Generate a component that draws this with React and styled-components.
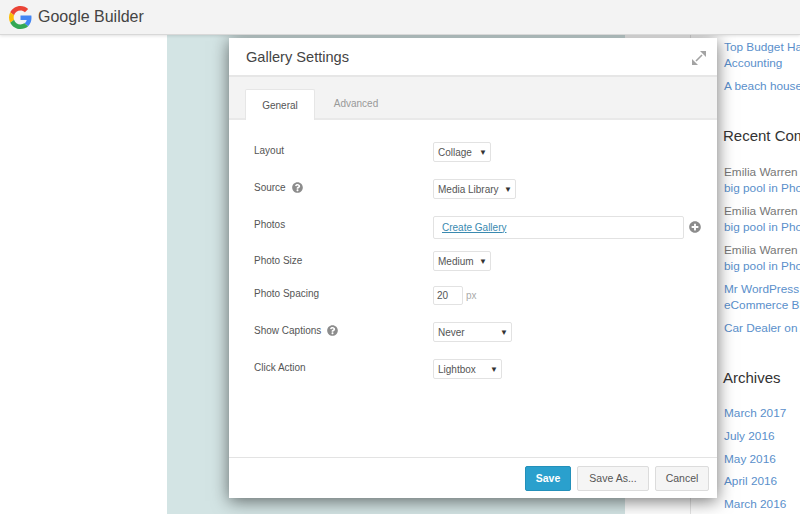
import React from "react";
import styled, { createGlobalStyle } from "styled-components";
import { FaPlusCircle, FaQuestionCircle } from "react-icons/fa";

const GlobalStyle = createGlobalStyle`
    html, body {
        margin: 0;
        height: 100%;
        overflow: hidden;
        background: #fff;
        font-family: "Liberation Sans", Arial, sans-serif;
    }
`;

const Page = styled.div`
    position: relative;
    width: 800px;
    height: 514px;
    overflow: hidden;
`;

const TopBar = styled.header`
    position: relative;
    z-index: 2;
    display: flex;
    align-items: center;
    gap: 6px;
    height: 34px;
    padding-left: 9px;
    background: #f3f3f3;
    border-bottom: 1px solid #d8d8d8;
    box-shadow: 0 1px 3px rgba(0, 0, 0, 0.12);
`;

const Brand = styled.span`
    font-size: 16px;
    color: #444;
`;

const Content = styled.div`
    display: flex;
    height: 479px;
`;

const Gutter = styled.div`
    width: 167px;
`;

const Hero = styled.div`
    width: 458px;
    background: #d3e4e4;
`;

const Spacer = styled.div`
    width: 65px;
`;

const Sidebar = styled.aside`
    flex: 1;
    min-width: 0;
    padding: 4px 0 0 33px;
    border-left: 1px solid #e4e4e4;
    overflow: hidden;
    white-space: nowrap;
    font-size: 11.8px;
    line-height: 16px;
`;

const SideLink = styled.a`
    display: block;
    color: #5a8fcb;
    margin-bottom: 7px;
`;

const ArchiveLink = styled(SideLink)`
    margin-bottom: 6.75px;
`;

const Muted = styled.div`
    color: #777;
    margin-bottom: 7px;
`;

const Blue = styled.span`
    display: block;
    color: #5a8fcb;
`;

const SideTitle = styled.h3`
    margin: ${(p) => p.$top}px 0 ${(p) => p.$bottom}px -1px;
    font-size: 15px;
    font-weight: 400;
    line-height: 20px;
    color: #333;
`;

const Modal = styled.section`
    position: absolute;
    z-index: 1;
    left: 229px;
    top: 38px;
    width: 488px;
    height: 460px;
    display: flex;
    flex-direction: column;
    background: #fff;
    box-shadow: 0 3px 16px rgba(0, 0, 0, 0.55);
`;

const ModalHeader = styled.div`
    display: flex;
    align-items: center;
    justify-content: space-between;
    height: 37px;
    padding: 0 11px 0 17px;
    border-bottom: 2px solid #e6e6e6;
`;

const ModalTitle = styled.h2`
    margin: 0;
    font-size: 14.6px;
    font-weight: 400;
    color: #444;
`;

const ExpandButton = styled.span`
    display: flex;
    margin-top: 3px;
`;

const Tabs = styled.div`
    display: flex;
    align-items: flex-end;
    height: 41px;
    padding-left: 16px;
    background: #f3f3f3;
    border-bottom: 2px solid #e9e9e9;
`;

const Tab = styled.div`
    display: flex;
    align-items: center;
    justify-content: center;
    box-sizing: border-box;
    width: ${(p) => (p.$active ? 70 : 82)}px;
    height: ${(p) => (p.$active ? 31 : 29)}px;
    margin-bottom: ${(p) => (p.$active ? -2 : 0)}px;
    font-size: 10px;
    color: ${(p) => (p.$active ? "#555" : "#999")};
    background: ${(p) => (p.$active ? "#fff" : "transparent")};
    border: ${(p) => (p.$active ? "1px solid #e6e6e6" : "none")};
    border-bottom: none;
    border-radius: 2px 2px 0 0;
`;

const Form = styled.div`
    flex: 1;
    padding: 13px 0 0 25px;
`;

const Row = styled.div`
    display: flex;
    align-items: center;
    height: ${(p) => p.$height}px;
`;

const Label = styled.div`
    display: flex;
    align-items: center;
    gap: 6px;
    width: 179px;
    margin-top: -${(p) => p.$lift || 4}px;
    font-size: 10px;
    color: #555;
`;

const Help = styled.span`
    display: flex;
    color: #8c8c8c;
    font-size: 11px;
`;

const Select = styled.div`
    display: flex;
    align-items: center;
    justify-content: space-between;
    box-sizing: border-box;
    width: ${(p) => p.$width}px;
    height: 20px;
    padding: 0 3px 0 4px;
    border: 1px solid #e2e2e2;
    border-radius: 2px;
    background: #fff;
    font-size: 10px;
    color: #555;
    white-space: nowrap;
`;

const Caret = styled.span`
    font-size: 8px;
    color: #333;
`;

const PickerBox = styled.div`
    display: flex;
    align-items: center;
    box-sizing: border-box;
    width: 251px;
    height: 23px;
    padding-left: 8px;
    border: 1px solid #e2e2e2;
    border-radius: 2px;
`;

const PickerLink = styled.a`
    font-size: 10px;
    color: #3a8ab0;
    text-decoration: underline;
`;

const AddButton = styled.span`
    display: flex;
    margin-left: 5px;
    color: #8c8c8c;
    font-size: 12px;
`;

const NumberInput = styled.div`
    display: flex;
    align-items: center;
    box-sizing: border-box;
    width: 30px;
    height: 19px;
    padding-left: 3px;
    border: 1px solid #e2e2e2;
    border-radius: 2px;
    font-size: 10px;
    color: #555;
`;

const Unit = styled.span`
    margin-left: 3px;
    font-size: 10px;
    color: #aaa;
`;

const Footer = styled.div`
    display: flex;
    align-items: center;
    justify-content: flex-end;
    gap: 6px;
    height: 40px;
    padding-right: 8px;
    border-top: 1px solid #e3e3e3;
`;

const Button = styled.button`
    box-sizing: border-box;
    width: ${(p) => p.$width}px;
    height: 25px;
    padding: 0;
    font-family: inherit;
    font-size: 10.5px;
    font-weight: ${(p) => (p.$primary ? 700 : 400)};
    color: ${(p) => (p.$primary ? "#fff" : "#555")};
    background: ${(p) => (p.$primary ? "#2aa0cd" : "#f5f5f5")};
    border: 1px solid ${(p) => (p.$primary ? "#2390ba" : "#dcdcdc")};
    border-radius: 2px;
`;

const GoogleLogo = () => (
    <svg width="23" height="23" viewBox="0 0 48 48">
        <path fill="#EA4335" d="M24 9.5c3.54 0 6.71 1.22 9.21 3.6l6.85-6.85C35.9 2.38 30.47 0 24 0 14.62 0 6.51 5.38 2.56 13.22l7.98 6.19C12.43 13.72 17.74 9.5 24 9.5z" />
        <path fill="#4285F4" d="M46.98 24.55c0-1.57-.15-3.09-.38-4.55H24v9.02h12.94c-.58 2.96-2.26 5.48-4.78 7.18l7.73 6c4.51-4.18 7.09-10.36 7.09-17.65z" />
        <path fill="#FBBC05" d="M10.53 28.59c-.48-1.45-.76-2.99-.76-4.59s.27-3.14.76-4.59l-7.98-6.19C.92 16.46 0 20.12 0 24c0 3.88.92 7.54 2.56 10.78l7.97-6.19z" />
        <path fill="#34A853" d="M24 48c6.48 0 11.93-2.13 15.89-5.81l-7.73-6c-2.15 1.45-4.92 2.3-8.16 2.3-6.26 0-11.57-4.22-13.47-9.91l-7.98 6.19C6.51 42.62 14.62 48 24 48z" />
    </svg>
);

// double-headed diagonal arrow, the resize handle in the modal header
const ExpandIcon = () => (
    <svg width="14" height="14" viewBox="0 0 14 14" fill="#a3a3a3">
        <polygon points="8,0 14,0 14,6" />
        <polygon points="0,8 0,14 6,14" />
        <line x1="10" y1="4" x2="4" y2="10" stroke="#a3a3a3" strokeWidth="1.6" />
    </svg>
);

const SelectField = ({ value, width }) => (
    <Select $width={width}>
        {value}
        <Caret>▼</Caret>
    </Select>
);

export default function App() {
    return (
        <Page>
            <GlobalStyle />
            <TopBar>
                <GoogleLogo />
                <Brand>Google Builder</Brand>
            </TopBar>
            <Content>
                <Gutter />
                <Hero />
                <Spacer />
                <Sidebar>
                    <SideLink>
                        Top Budget Hacks for
                        <br />
                        Accounting
                    </SideLink>
                    <SideLink>A beach house in Malibu</SideLink>
                    <SideTitle $top={32} $bottom={18}>Recent Comments</SideTitle>
                    <Muted>
                        Emilia Warren on
                        <Blue>big pool in Photoshop</Blue>
                    </Muted>
                    <Muted>
                        Emilia Warren on
                        <Blue>big pool in Photoshop</Blue>
                    </Muted>
                    <Muted>
                        Emilia Warren on
                        <Blue>big pool in Photoshop</Blue>
                    </Muted>
                    <SideLink>
                        Mr WordPress on
                        <br />
                        eCommerce Blog
                    </SideLink>
                    <SideLink>Car Dealer on A</SideLink>
                    <SideTitle $top={32} $bottom={17}>Archives</SideTitle>
                    <ArchiveLink>March 2017</ArchiveLink>
                    <ArchiveLink>July 2016</ArchiveLink>
                    <ArchiveLink>May 2016</ArchiveLink>
                    <ArchiveLink>April 2016</ArchiveLink>
                    <ArchiveLink>March 2016</ArchiveLink>
                </Sidebar>
            </Content>
            <Modal>
                <ModalHeader>
                    <ModalTitle>Gallery Settings</ModalTitle>
                    <ExpandButton>
                        <ExpandIcon />
                    </ExpandButton>
                </ModalHeader>
                <Tabs>
                    <Tab $active>General</Tab>
                    <Tab>Advanced</Tab>
                </Tabs>
                <Form>
                    <Row $height={38}>
                        <Label>Layout</Label>
                        <SelectField value="Collage" width={58} />
                    </Row>
                    <Row $height={36}>
                        <Label>
                            Source
                            <Help>
                                <FaQuestionCircle />
                            </Help>
                        </Label>
                        <SelectField value="Media Library" width={83} />
                    </Row>
                    <Row $height={40}>
                        <Label $lift={6}>Photos</Label>
                        <PickerBox>
                            <PickerLink>Create Gallery</PickerLink>
                        </PickerBox>
                        <AddButton>
                            <FaPlusCircle />
                        </AddButton>
                    </Row>
                    <Row $height={28}>
                        <Label $lift={2}>Photo Size</Label>
                        <SelectField value="Medium" width={58} />
                    </Row>
                    <Row $height={40}>
                        <Label>Photo Spacing</Label>
                        <NumberInput>20</NumberInput>
                        <Unit>px</Unit>
                    </Row>
                    <Row $height={34}>
                        <Label>
                            Show Captions
                            <Help>
                                <FaQuestionCircle />
                            </Help>
                        </Label>
                        <SelectField value="Never" width={79} />
                    </Row>
                    <Row $height={40}>
                        <Label>Click Action</Label>
                        <SelectField value="Lightbox" width={69} />
                    </Row>
                </Form>
                <Footer>
                    <Button $primary $width={46}>Save</Button>
                    <Button $width={72}>Save As...</Button>
                    <Button $width={54}>Cancel</Button>
                </Footer>
            </Modal>
        </Page>
    );
}
